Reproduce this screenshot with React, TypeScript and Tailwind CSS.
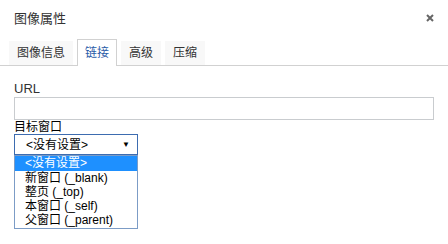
const FONT = "font-['Liberation_Sans','Noto_Sans_CJK_SC',sans-serif]";

const tabs = ["图像信息", "链接", "高级", "压缩"];
const options = ["<没有设置>", "新窗口 (_blank)", "整页 (_top)", "本窗口 (_self)", "父窗口 (_parent)"];

export default function App() {
  return (
    <div className={`${FONT} h-[244px] w-[448px] overflow-hidden bg-white text-[#333]`}>
      <div className="flex h-[37px] items-center justify-between pl-[14px] pr-[14px]">
        <span className="text-[13px]">图像属性</span>
        <svg width="8" height="8" viewBox="0 0 8 8" className="mt-[-2px]">
          <path d="M1 1 L7 7 M7 1 L1 7" stroke="#666" strokeWidth="2" />
        </svg>
      </div>

      <div className="flex h-[29px] items-end gap-[4px] border-b border-[#d1d1d1] pl-[9px]">
        {tabs.map((t, i) =>
          i === 1 ? (
            <div
              key={t}
              className="mb-[-1px] flex h-[27px] items-center border border-b-0 border-[#d1d1d1] bg-white px-[7px] text-[12px] text-[#2a5ca8]"
            >
              {t}
            </div>
          ) : (
            <div key={t} className="flex h-[24px] items-center bg-[#f8f8f8] px-[8px] text-[12px]">
              {t}
            </div>
          )
        )}
      </div>

      <div className="px-[14px] pt-[15px]">
        <div className="text-[13px] leading-[15px] text-[#333]">URL</div>
        <div className="mt-[1px] h-[23px] w-[420px] border border-[#c9cccf] bg-white" />
        <div className="text-[12px] leading-[14px] text-black">目标窗口</div>
        <div className="relative w-[124px]">
          <div className="flex h-[21px] items-center justify-between border border-[#3d6cb0] bg-white pl-[11px] pr-[7px] text-[12px] text-black">
            <span>&lt;没有设置&gt;</span>
            <span className="text-[8px]">▼</span>
          </div>
          <div className="absolute left-0 top-[21px] w-[124px] border border-[#7c9cc6] bg-white pb-[1px]">
            {options.map((o, i) => (
              <div
                key={o}
                className={`pl-[10px] text-[12px] ${
                  i === 0 ? "h-[15px] bg-[#1e90ff] leading-[15px] text-white" : "h-[14px] leading-[14px] text-black"
                }`}
              >
                {o}
              </div>
            ))}
          </div>
        </div>
      </div>
    </div>
  );
}
